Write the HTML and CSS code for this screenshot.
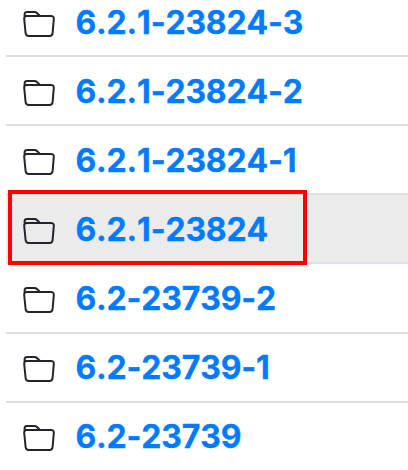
FILE: index.html
```html
<!DOCTYPE html>
<html lang="en">
<head>
<meta charset="utf-8">
<title>Releases</title>
<link rel="stylesheet" href="styles.css">
</head>
<body>
<svg class="defs" aria-hidden="true">
<symbol id="folder" viewBox="0 0 32 26"><path d="M1.6 7V3.2Q1.7 1 4.2 1H11.2Q13 1 14.2 2.2L17 4.9M1.2 8Q1 4.9 3.6 4.9H27.8Q31 4.9 30.8 8L29.6 22Q29.3 25 26.5 25H5.8Q2.9 25 2.6 22Z"/></symbol>
</svg>
<ul class="list">
<li class="row"><svg class="icon"><use href="#folder"/></svg><a class="name">6.2.1-23824-3</a></li>
<li class="row"><svg class="icon"><use href="#folder"/></svg><a class="name">6.2.1-23824-2</a></li>
<li class="row"><svg class="icon"><use href="#folder"/></svg><a class="name">6.2.1-23824-1</a></li>
<li class="row selected"><svg class="icon"><use href="#folder"/></svg><a class="name">6.2.1-23824</a></li>
<li class="row"><svg class="icon"><use href="#folder"/></svg><a class="name">6.2-23739-2</a></li>
<li class="row"><svg class="icon"><use href="#folder"/></svg><a class="name">6.2-23739-1</a></li>
<li class="row"><svg class="icon"><use href="#folder"/></svg><a class="name">6.2-23739</a></li>
</ul>
</body>
</html>
```
FILE: styles.css
```css
body { margin: 0; background: #fff; height: 470px; overflow: hidden; }
.defs { position: absolute; width: 0; height: 0; }
.list { list-style: none; margin: -11.95px 0 0 6px; padding: 0; }
.row { display: flex; align-items: center; box-sizing: border-box; height: 69.1px; padding: 2px 0 0 17px; border-bottom: 2px solid #dce0e5; position: relative; }
.row:last-child { border-bottom-color: transparent; }
.icon { width: 32px; height: 26px; margin: 2px 20.5px 0 0; fill: none; stroke: #212529; stroke-width: 2; stroke-linejoin: round; }
.name { font: 700 32px/40px Inter, sans-serif; font-feature-settings: "calt" 0; font-kerning: none; letter-spacing: -.19px; color: #007bff; -webkit-text-stroke: .3px #007bff; }
.selected { background: #ebebeb; }
.selected::after { content: ""; position: absolute; left: 2px; top: -5px; width: 291px; height: 67px; border: 4px solid #f00; }
```
